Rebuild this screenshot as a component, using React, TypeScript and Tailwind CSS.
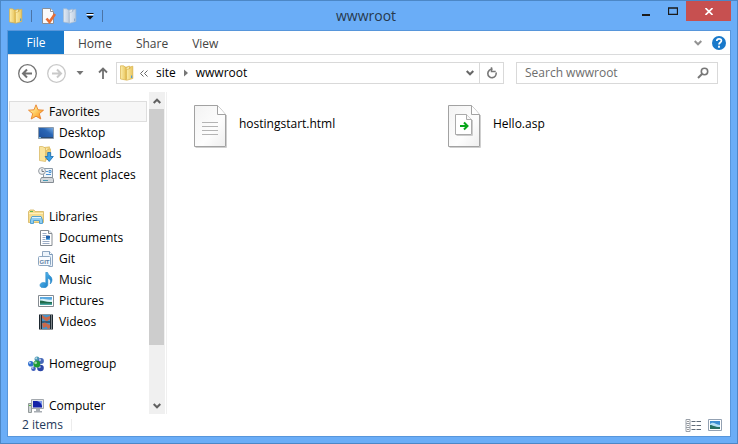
import type { ReactNode } from "react";

function FolderIcon({ muted = false }: { muted?: boolean }) {
  const id = muted ? "folder-muted" : "folder";
  const edge = muted ? "#a9bbd0" : "#d9b048";
  return (
    <svg viewBox="0 0 16 16" className="size-4 shrink-0" aria-hidden="true">
      <defs>
        <linearGradient id={id} x1="0" x2="1">
          <stop offset="0" stopColor={muted ? "#e3ebf4" : "#fcedaa"} />
          <stop offset="1" stopColor={muted ? "#bccde2" : "#e9c65f"} />
        </linearGradient>
      </defs>
      <path d="M6 2.500 10.500 1v12L6 14z" fill={muted ? "#c3d2e4" : "#e6c25a"} stroke={edge} strokeWidth=".6" />
      <path d="M7.500 3 10 2v9H7.500z" fill={muted ? "#e8eff7" : "#fdf3c6"} />
      <path d="M1.500.8h3l2.500 1.700V15l-5.500-1z" fill={`url(#${id})`} stroke={edge} strokeWidth=".7" />
      <path d="m7.500 4.500 3.500-1V2l2.800-.8v12.300L7.500 15.300z" fill={`url(#${id})`} stroke={edge} strokeWidth=".7" />
      <path d="M12.600 10.500v2.500" stroke={muted ? "#8ca9cc" : "#4f9fd8"} strokeWidth="1.200" />
    </svg>
  );
}

function PropertiesIcon() {
  return (
    <svg viewBox="0 0 16 16" className="size-4" aria-hidden="true">
      <path d="M2.500.5h8l3 3v12h-11z" fill="#fafafa" stroke="#8b8f96" />
      <path d="M10.500.5v3h3" fill="#fff" stroke="#8b8f96" />
      <path d="m6.500 10.500 3 3.500L15 6" fill="none" stroke="#e46c35" strokeWidth="2.600" />
    </svg>
  );
}

function StarIcon() {
  return (
    <svg viewBox="0 0 16 16" className="size-4" aria-hidden="true">
      <defs>
        <linearGradient id="star" x1="0" y1="0" x2="1" y2="1">
          <stop offset=".2" stopColor="#fff3a0" />
          <stop offset=".65" stopColor="#fdb643" />
          <stop offset="1" stopColor="#ef7d1a" />
        </linearGradient>
      </defs>
      <path d="m8 .8 2 5 5.500.4-4.200 3.500 1.500 5.300L8 12.200 3.200 15l1.500-5.300L.5 6.200 6 5.800z" fill="url(#star)" stroke="#e8802a" strokeWidth=".9" />
    </svg>
  );
}

function DesktopIcon() {
  return (
    <svg viewBox="0 0 16 16" className="size-4" aria-hidden="true">
      <defs>
        <linearGradient id="desk" x1="0" y1="1" x2="1" y2="0">
          <stop offset="0" stopColor="#1d4f9c" />
          <stop offset=".6" stopColor="#2a66b4" />
          <stop offset="1" stopColor="#7fb2e6" />
        </linearGradient>
      </defs>
      <path d="M.5 2.500h15v11H.5z" fill="url(#desk)" stroke="#8d9bab" />
      <path d="M1 12.500h14" stroke="#2c4a70" />
      <path d="M1 12.500h2" stroke="#78c1e8" />
    </svg>
  );
}

function DownloadsIcon() {
  return (
    <svg viewBox="0 0 16 16" className="size-4" aria-hidden="true">
      <path d="M6 1.500 11.500.8V13L6 14z" fill="#efd27c" stroke="#d8b252" strokeWidth=".6" />
      <path d="M7.500 2.500h2v10h-2z" fill="#fff5cd" />
      <path d="M1.500.5h3l3 1.500v13.500l-6-1z" fill="#f9e49d" stroke="#d5b35a" strokeWidth=".7" />
      <path d="m8.500 4 4-1.200V12l-4 2z" fill="#f1d178" stroke="#d8b252" strokeWidth=".6" />
      <path d="M9.700 6.500h3v4h2.600l-4.100 5-4.100-5h2.600z" fill="#3aa0e8" stroke="#1769b0" strokeWidth=".8" />
    </svg>
  );
}

function RecentIcon() {
  return (
    <svg viewBox="0 0 16 16" className="size-4" aria-hidden="true">
      <path d="M5.500 1.500h9v9h-9z" fill="#eff4f9" stroke="#8c9aa7" />
      <path d="M8 4.500h2M11 3.500h2v2h-2zM8 7.500h5" fill="none" stroke="#4e94d4" />
      <path d="m3.500 10.500-1 2v3h13v-3l-1-2z" fill="#d4d8dc" stroke="#858c93" />
      <path d="M5 13.500h5" stroke="#4599b5" />
      <circle cx="4" cy="4" r="3.400" fill="#f1f3f5" stroke="#9399a0" />
      <path d="M4 2v2.500h2" fill="none" stroke="#596069" strokeWidth=".8" />
    </svg>
  );
}

function LibrariesIcon() {
  return (
    <svg viewBox="0 0 16 16" className="size-4" aria-hidden="true">
      <path d="M.5 2.500 2 1h4l1 1.500h8.500v11H.5z" fill="#f6dc8e" stroke="#d4b45f" strokeWidth=".8" />
      <path d="M1 4.500h14" stroke="#fff1bc" />
      <path d="M2 2.500h3" stroke="#60b857" />
      <path d="M4 7.500 2.500 11v3.500h3v-3h6v3h3V11L13 7.500z" fill="#8fcdf0" stroke="#4a9bce" strokeWidth=".9" />
      <path d="M4 8.500h9" stroke="#dff3fc" />
    </svg>
  );
}

function DocumentsIcon() {
  return (
    <svg viewBox="0 0 16 16" className="size-4" aria-hidden="true">
      <path d="M2.500.5h8l3.500 3v12H2.500z" fill="#fff" stroke="#858b91" />
      <path d="M10.500.5v3H14" fill="#eceff1" stroke="#858b91" />
      <path d="M4.500 3.500h4M4.500 5.500h7M4.500 7.500h3M4.500 9.500h3M4.500 11.500h7M4.500 13.500h7" stroke="#9aabc4" />
      <path d="M8 6h4v4H8z" fill="#1d62ae" />
      <path d="M8 10V8.500l2 .5 2-1v2" fill="#62aee3" />
    </svg>
  );
}

function GitIcon() {
  return (
    <svg viewBox="0 0 16 16" className="size-4" aria-hidden="true">
      <path d="M4.500 5V.500h7l3 3v12h-4" fill="#edf4fb" stroke="#8fa6c0" />
      <path d="M11.500.5v3h3" fill="#fff" stroke="#7898ba" />
      <rect x=".5" y="5.500" width="12" height="9" rx="1" fill="#f8fbff" stroke="#8ca6c1" />
      <text x="6.500" y="12.500" textAnchor="middle" fontFamily="Liberation Sans, sans-serif" fontSize="6" fontWeight="700" fill="#5d7fa3">GIT</text>
    </svg>
  );
}

function MusicIcon() {
  return (
    <svg viewBox="0 0 16 16" className="size-4" aria-hidden="true">
      <defs>
        <linearGradient id="music" x1="0" y1="0" x2="1" y2="1">
          <stop offset="0" stopColor="#6bc9fa" />
          <stop offset="1" stopColor="#0870bd" />
        </linearGradient>
      </defs>
      <path d="M7.800.3h1.700c.3 3 4.500 3.700 4.500 7.200 0 2-.8 3.500-1.800 4.500.8-3 .3-5-2.400-6v6.500c0 4.300-7.800 4.300-7.800.8 0-2.500 3.300-3.600 5.800-2.300z" fill="url(#music)" stroke="#2586c7" strokeWidth=".6" />
    </svg>
  );
}

function PicturesIcon() {
  return (
    <svg viewBox="0 0 16 16" className="size-4" aria-hidden="true">
      <path d="M.5 2.500h15v11H.5z" fill="#fff" stroke="#858b91" />
      <path d="M2 4h12v8H2z" fill="#5aa8e0" />
      <path d="M2 6.500c3-2 6 1 12 0V10H2z" fill="#d9f1f8" />
      <path d="M2 7.500c4 0 6 2 12 1.500v2H2z" fill="#1f6b4a" />
      <path d="M2 10.500h12V12H2z" fill="#49a5a0" />
    </svg>
  );
}

function VideosIcon() {
  return (
    <svg viewBox="0 0 16 16" className="size-4" aria-hidden="true">
      <path d="M1 .5h14v15H1z" fill="#1e2830" />
      <path d="M4 1h8v6.500H4zM4 8.500h8V15H4z" fill="#4494cb" />
      <path d="m4 1 4 2.500L12 2v3L9.500 7H8L4 4zM4 9.500l3-1 2 1 3 1.500v3l-2 1-1.500-2.500L5 14z" fill="#c8694b" />
      <path d="M2.500 1.500v13M13.500 1.500v13" stroke="#e3e6e8" strokeDasharray="1 1" />
    </svg>
  );
}

function HomegroupIcon() {
  const ball = (cx: number, cy: number, r: number, color: string) => (
    <g>
      <circle cx={cx} cy={cy} r={r} fill={color} />
      <circle cx={cx - r / 3} cy={cy - r / 3} r={r / 2.500} fill="#fff" opacity=".6" />
    </g>
  );
  return (
    <svg viewBox="0 0 16 16" className="size-4" aria-hidden="true">
      {ball(9, 3, 2.500, "#4e9ab8")}
      {ball(2.800, 7.800, 2.800, "#2f6fce")}
      {ball(13, 5, 2.900, "#4568b8")}
      {ball(12.500, 12, 3.300, "#2c47a8")}
      {ball(5.500, 12.800, 2.300, "#3f5fbd")}
      {ball(8.800, 8, 3.500, "#1f9a35")}
    </svg>
  );
}

function ComputerIcon() {
  return (
    <svg viewBox="0 0 16 16" className="size-4" aria-hidden="true">
      <path d="M3.500 1.500h12v9h-12z" fill="#e4e6e9" stroke="#a3a8ae" />
      <path d="M5 3h9v6.500H5z" fill="#1423a8" />
      <path d="M9 3h5v5c-1-3-2.500-4-5-5z" fill="#7d9aec" />
      <path d="M8 11h4v2h2v1.500H6V13h2z" fill="#a8adb3" />
      <path d="M.5 5.500h3v9h-3z" fill="#ced4d5" stroke="#929999" />
      <path d="M1 7.500h2" stroke="#56b747" />
    </svg>
  );
}

function Caret({ up = false, className = "" }: { up?: boolean; className?: string }) {
  return (
    <svg viewBox="0 0 8 6" className={`h-1.5 w-2 ${className}`} aria-hidden="true">
      <path d={up ? "m.7 5 3.300-3.300L7.300 5" : "M.7 1 4 4.300 7.300 1"} fill="none" stroke="currentColor" strokeWidth="2" />
    </svg>
  );
}

function FileIcon({ asp = false }: { asp?: boolean }) {
  const id = asp ? "sheet-asp" : "sheet-html";
  return (
    <svg viewBox="0 0 34 44" className="h-11 w-[34px] shrink-0" aria-hidden="true">
      <defs>
        <linearGradient id={id} x1="0" y1="0" x2="1" y2="1">
          <stop offset="0" stopColor="#f3f3f3" />
          <stop offset=".6" stopColor="#fdfdfd" />
          <stop offset="1" stopColor="#eeeeee" />
        </linearGradient>
      </defs>
      <path d="M1.500 42.500h31V10" fill="none" stroke="#cfcfcf" />
      <path d="M.5.500h23l8 9v32H.5z" fill={`url(#${id})`} stroke="#a2a2a2" />
      <path d="M23.500.5v9h8" fill="#fff" stroke="#a2a2a2" />
      {asp ? (
        <>
          <path d="M8.500 30.500h16V15" fill="none" stroke="#cccccc" />
          <path d="M7.500 9.500h11l5 5v15h-16z" fill="#fff" stroke="#aaaaaa" />
          <path d="M18.500 9.500v5h5" fill="#f7f7f7" stroke="#aaaaaa" />
          <path d="M12 21h7M16 17.500l3.500 3.500-3.500 3.500" fill="none" stroke="#08a61b" strokeWidth="2" />
        </>
      ) : (
        <path d="M8 17.500h16M8 21.500h16M8 25.500h16M8 29.500h16" stroke="#b4b4b4" />
      )}
    </svg>
  );
}

type Place = { label: string; icon: ReactNode };
type Group = Place & { children: Place[]; selected?: boolean };

const groups: Group[] = [
  {
    label: "Favorites",
    icon: <StarIcon />,
    selected: true,
    children: [
      { label: "Desktop", icon: <DesktopIcon /> },
      { label: "Downloads", icon: <DownloadsIcon /> },
      { label: "Recent places", icon: <RecentIcon /> },
    ],
  },
  {
    label: "Libraries",
    icon: <LibrariesIcon />,
    children: [
      { label: "Documents", icon: <DocumentsIcon /> },
      { label: "Git", icon: <GitIcon /> },
      { label: "Music", icon: <MusicIcon /> },
      { label: "Pictures", icon: <PicturesIcon /> },
      { label: "Videos", icon: <VideosIcon /> },
    ],
  },
  { label: "Homegroup", icon: <HomegroupIcon />, children: [] },
  { label: "Computer", icon: <ComputerIcon />, children: [] },
];

function TitleBar() {
  return (
    <header className="grid h-[29px] shrink-0 grid-cols-[1fr_auto_1fr] pr-1.5">
      <div className="flex items-center pl-[7px]">
        <FolderIcon />
        <span className="mr-2 ml-[7px] h-3 w-px bg-[#4b74a6]" />
        <button aria-label="Properties"><PropertiesIcon /></button>
        <button aria-label="New folder" className="ml-1.5"><FolderIcon muted /></button>
        <button aria-label="Customize Quick Access Toolbar" className="ml-2">
          <svg viewBox="0 0 8 8" className="size-2" aria-hidden="true">
            <path d="M.5 2.500h7" stroke="#fff" />
            <path d="M.5 1.500h7" stroke="#111" />
            <path d="M.5 4h7L4 7.500z" fill="#111" />
          </svg>
        </button>
        <span className="ml-2 h-3 w-px bg-[#4b74a6]" />
      </div>
      <h1 className="self-center text-[14px] leading-5 text-[#27394d]">wwwroot</h1>
      <div className="flex items-start justify-end">
        <button aria-label="Minimize" className="flex h-[19px] w-[27px] items-center justify-center">
          <svg viewBox="0 0 8 10" className="h-2.5 w-2" aria-hidden="true"><path d="M0 9h8" stroke="#1b1b1b" strokeWidth="2" /></svg>
        </button>
        <button aria-label="Maximize" className="flex h-[19px] w-[27px] items-center justify-center">
          <svg viewBox="0 0 10 8" className="h-2 w-2.5" aria-hidden="true"><path d="M.5 1v6.500h9V1M0 1h10" fill="none" stroke="#1b1b1b" strokeWidth="1.300" /></svg>
        </button>
        <button aria-label="Close" className="flex h-5 w-[45px] items-center justify-center bg-[#c75050]">
          <svg viewBox="0 0 8 7" className="h-[7px] w-2" aria-hidden="true"><path d="m.5 0 7 7m0-7-7 7" stroke="#fff" strokeWidth="1.600" /></svg>
        </button>
      </div>
    </header>
  );
}

function Ribbon() {
  return (
    <nav className="flex h-6 shrink-0 items-stretch border-b border-[#dadbdc] pr-1 text-[#444]">
      <button className="w-14 bg-[#1979ca] text-white">File</button>
      <button className="ml-3.5 pt-0.5">Home</button>
      <button className="ml-6 pt-0.5">Share</button>
      <button className="ml-6 pt-0.5">View</button>
      <div className="ml-auto flex items-center gap-2.5">
        <button aria-label="Expand the Ribbon"><Caret className="text-[#929292]" /></button>
        <button aria-label="Help">
          <svg viewBox="0 0 14 14" className="size-3.5" aria-hidden="true">
            <circle cx="7" cy="7" r="7" fill="#1979ca" />
            <path d="M4.800 5c0-3 4.600-2.800 4.600-.3C9.400 6.500 7 6.500 7 8.500" fill="none" stroke="#fff" strokeWidth="1.700" />
            <path d="M7 9.800v1.900" stroke="#fff" strokeWidth="1.800" />
          </svg>
        </button>
      </div>
    </nav>
  );
}

function HistoryButton({ forward = false }: { forward?: boolean }) {
  return (
    <button aria-label={forward ? "Forward" : "Back"} className={forward ? "ml-2.5 text-[#c9c9c9]" : "text-[#727272]"}>
      <svg viewBox="0 0 19 19" className="size-[19px]" fill="none" stroke="currentColor" aria-hidden="true">
        <circle cx="9.500" cy="9.500" r="8.800" strokeWidth="1.300" />
        <path d={forward ? "M5 9.500h8.500M10 5.500l4 4-4 4" : "M14 9.500H5.500M9 5.500l-4 4 4 4"} strokeWidth="2" />
      </svg>
    </button>
  );
}

function AddressRow() {
  return (
    <div className="flex shrink-0 items-center pt-[7px] pr-3 pb-2 pl-2.5">
      <HistoryButton />
      <HistoryButton forward />
      <button aria-label="Recent locations" className="ml-2.5">
        <svg viewBox="0 0 8 4" className="h-1 w-2" aria-hidden="true"><path d="M.5 0h7L4 4z" fill="#757575" /></svg>
      </button>
      <button aria-label="Up" className="ml-3.5">
        <svg viewBox="0 0 10 12" className="h-3 w-2.5" aria-hidden="true"><path d="M5 12V1.500M1 5.500l4-4 4 4" fill="none" stroke="#707070" strokeWidth="1.800" /></svg>
      </button>
      <div className="ml-2 flex h-[22px] flex-1 items-center border border-[#d9d9d9] pl-0.5">
        <FolderIcon />
        <button aria-label="Parent folders" className="ml-[5px] text-[#666]">
          <svg viewBox="0 0 8 7" className="h-[7px] w-2" aria-hidden="true"><path d="M3.500.5l-3 3 3 3m4-6-3 3 3 3" fill="none" stroke="currentColor" /></svg>
        </button>
        <button className="ml-2">site</button>
        <svg viewBox="0 0 4 8" className="ml-2 h-2 w-1" aria-hidden="true"><path d="m0 .5 4 3.500-4 3.500z" fill="#777" /></svg>
        <button className="ml-2">wwwroot</button>
        <button aria-label="Previous locations" className="mr-[5px] ml-auto text-[#666]"><Caret /></button>
        <button aria-label="Refresh" className="flex h-full w-6 items-center justify-center border-l border-[#d9d9d9]">
          <svg viewBox="0 0 12 12" className="size-3" fill="none" stroke="#777" aria-hidden="true">
            <path d="M6.500 2.300a4.200 4.200 0 1 0 3.600 3.200" strokeWidth="1.600" />
            <path d="M5.500.3v4.200h4.200" strokeWidth="1.500" />
          </svg>
        </button>
      </div>
      <form className="ml-3 flex h-[22px] w-[202px] items-center border border-[#d9d9d9] px-2" onSubmit={(e) => e.preventDefault()}>
        <input aria-label="Search wwwroot" placeholder="Search wwwroot" className="min-w-0 flex-1 bg-transparent outline-none placeholder:text-[#6d6d6d]" />
        <button aria-label="Search">
          <svg viewBox="0 0 12 12" className="size-3" fill="none" stroke="#777" aria-hidden="true">
            <circle cx="7.500" cy="4.500" r="3.200" strokeWidth="1.600" />
            <path d="M5 7 1 11" strokeWidth="2" />
          </svg>
        </button>
      </form>
    </div>
  );
}

function Sidebar() {
  return (
    <aside className="flex w-[159px] shrink-0 border-r border-[#f0f0f0]">
      <ul className="min-w-0 flex-1 overflow-hidden pt-[9px] pr-0.5 pl-px">
        {groups.map((group) => (
          <li key={group.label} className="mb-[21px]">
            <button className={`flex h-[21px] w-full items-center gap-[5px] border pl-[18px] ${group.selected ? "border-[#dedede] bg-[#f7f7f7]" : "border-transparent"}`}>
              {group.icon}
              {group.label}
            </button>
            <ul>
              {group.children.map((place) => (
                <li key={place.label}>
                  <button className="flex h-[21px] w-full items-center gap-[5px] pl-[29px]">
                    {place.icon}
                    {place.label}
                  </button>
                </li>
              ))}
            </ul>
          </li>
        ))}
      </ul>
      <div className="mr-px flex w-4 flex-col bg-[#f0f0f0] text-[#606060]">
        <button aria-label="Scroll up" className="flex h-[17px] items-center justify-center"><Caret up /></button>
        <div className="flex-1">
          <div className="h-[82%] w-[15px] bg-[#cdcdcd]" />
        </div>
        <button aria-label="Scroll down" className="flex h-[17px] items-center justify-center"><Caret /></button>
      </div>
    </aside>
  );
}

function StatusBar() {
  return (
    <footer className="flex h-[22px] shrink-0 items-center pr-2 pl-3.5 text-[#1e395b]">
      <span className="border-r border-[#ececec] pr-2 leading-3">2 items</span>
      <button aria-label="Details view" className="ml-auto">
        <svg viewBox="0 0 16 13" className="h-[13px] w-4" fill="none" aria-hidden="true">
          <path d="M1 .5h4v12H1zM1 4.500h4M1 8.500h4" stroke="#9aa0a8" />
          <path d="M2.500 2.500h1M2.500 6.500h1M2.500 10.500h1" stroke="#333" />
          <path d="M6.500 2.500h4m1 0H16m-9.500 4h4m1 0H16m-9.500 4h4m1 0H16" stroke="#5f6b78" />
        </svg>
      </button>
      <button aria-label="Large icons view" className="ml-[7px]">
        <svg viewBox="0 0 14 12" className="h-3 w-3.5" aria-hidden="true">
          <path d="M.5.500h13v11H.5z" fill="#fff" stroke="#93a1b2" />
          <path d="M2 2h10v8H2z" fill="#3e8fd1" />
          <path d="M2 5c3-3 5 0 10 1v2H2z" fill="#b5e0f5" />
          <path d="M2 6c3 0 4 2 10 2v2H2z" fill="#287061" />
        </svg>
      </button>
    </footer>
  );
}

export default function App() {
  return (
    <div className="flex h-screen flex-col border border-[#4c87c6] bg-[#6aadf7] font-['Open_Sans','Noto_Sans',sans-serif] text-[12px] leading-4 text-black">
      <TitleBar />
      <div className="mx-1.5 mb-1.5 flex min-h-0 flex-1 flex-col border border-[#5796db] bg-white">
        <Ribbon />
        <AddressRow />
        <div className="flex min-h-0 flex-1">
          <Sidebar />
          <main className="flex flex-1 flex-wrap content-start pt-[13px] pl-[27px]">
            <button className="flex h-11 w-[254px] gap-[11px] text-left">
              <FileIcon />
              <span className="pt-[11px]">hostingstart.html</span>
            </button>
            <button className="flex h-11 w-[254px] gap-[11px] text-left">
              <FileIcon asp />
              <span className="pt-[11px]">Hello.asp</span>
            </button>
          </main>
        </div>
        <StatusBar />
      </div>
    </div>
  );
}
